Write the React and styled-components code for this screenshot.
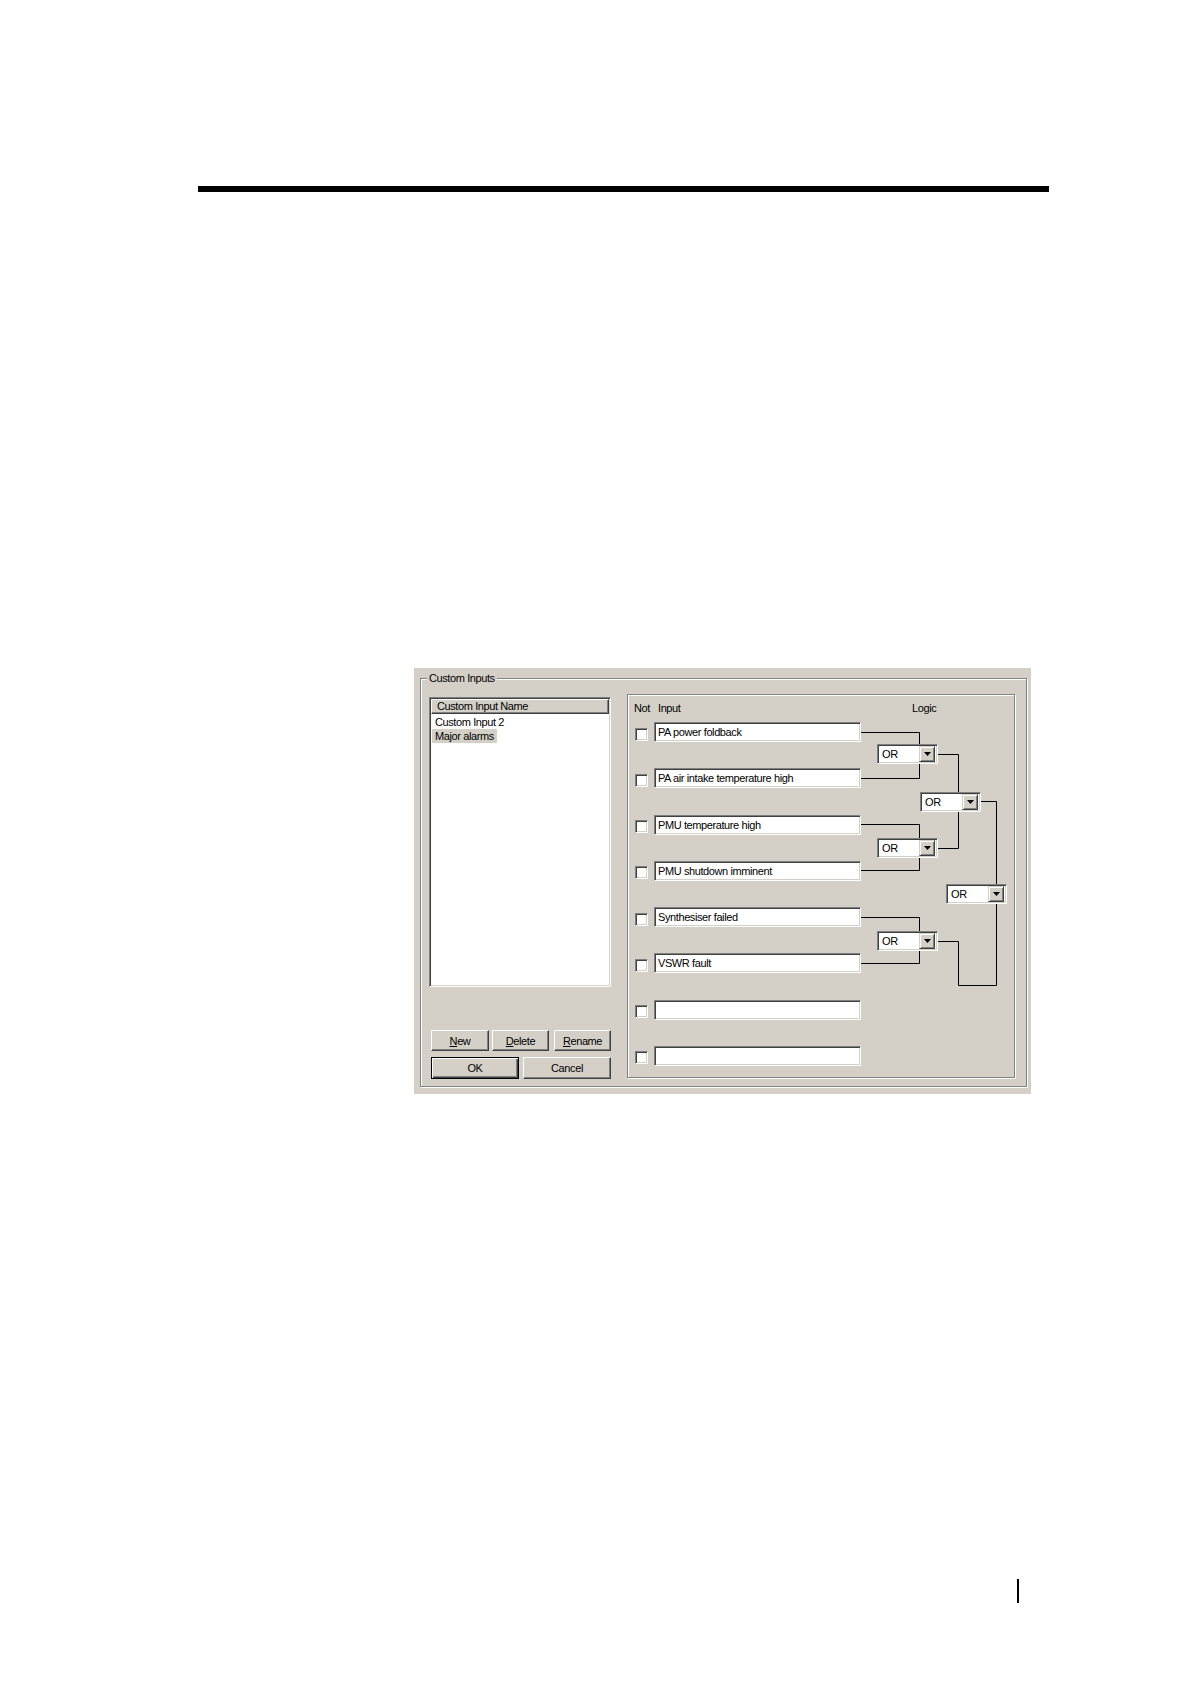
import React from "react";
import styled, { createGlobalStyle } from "styled-components";

const GlobalStyle = createGlobalStyle`
  html, body { margin: 0; padding: 0; background: #ffffff; }
  body { font-family: "Liberation Sans", Arial, sans-serif; }
  * { box-sizing: border-box; }
`;

const FACE = "#d4d0c8";
const SHADOW = "#808080";
const DARK = "#404040";

const Page = styled.div`
  width: 1190px;
  min-height: 1684px;
  display: flex;
  flex-direction: column;
  overflow: hidden;
`;

const Rule = styled.div`
  margin: 186px 0 0 198px;
  width: 851px;
  height: 6px;
  background: #000;
`;

const PageMark = styled.div`
  margin: 485px 0 0 1017px;
  width: 2px;
  height: 24px;
  background: #000;
`;

const Dialog = styled.div`
  margin: 476px 0 0 414px;
  width: 617px;
  height: 426px;
  background: ${FACE};
  padding: 10px 4px 6px 6px;
  font-family: "Liberation Sans", Arial, sans-serif;
  font-size: 11px;
  letter-spacing: -0.4px;
  color: #000;
`;

const GroupBox = styled.div`
  position: relative;
  width: 607px;
  height: 409px;
  border: 1px solid ${SHADOW};
  box-shadow: 1px 1px 0 #fff, inset 1px 1px 0 #fff;
  display: flex;
  align-items: flex-start;
  padding: 15px 0 0 8px;
  gap: 16px;
`;

const Legend = styled.span`
  position: absolute;
  left: 6px;
  top: -8px;
  padding: 0 2px;
  background: ${FACE};
  line-height: 14px;
`;

const LeftColumn = styled.div`
  width: 182px;
  margin-top: 3px;
  display: flex;
  flex-direction: column;
`;

const ListBox = styled.div`
  width: 182px;
  height: 290px;
  background: #fff;
  border: 1px solid;
  border-color: ${SHADOW} #fff #fff ${SHADOW};
  box-shadow: inset 1px 1px 0 ${DARK}, inset -1px -1px 0 ${FACE};
  padding: 1px;
  display: flex;
  flex-direction: column;
`;

const ListHeader = styled.div`
  height: 15px;
  background: ${FACE};
  border: 1px solid;
  border-color: #fff ${DARK} ${DARK} #fff;
  box-shadow: inset -1px -1px 0 ${SHADOW};
  padding-left: 5px;
  line-height: 13px;
`;

const ListItems = styled.div`
  display: flex;
  flex-direction: column;
  align-items: flex-start;
  padding: 1px 0 0 1px;
`;

const ListItem = styled.div`
  height: 14px;
  line-height: 14px;
  padding: 0 3px;
  background: ${(p) => (p.$selected ? FACE : "transparent")};
`;

const ButtonRow = styled.div`
  display: flex;
  padding-left: 2px;
  gap: ${(p) => p.$gap || 3}px;
  margin-top: ${(p) => p.$top}px;
`;

const Button = styled.div`
  width: ${(p) => p.$w}px;
  height: ${(p) => p.$h || 21}px;
  margin-left: ${(p) => p.$ml || 0}px;
  background: ${FACE};
  border: 1px solid;
  border-color: #fff ${DARK} ${DARK} #fff;
  box-shadow: inset -1px -1px 0 ${SHADOW};
  display: flex;
  align-items: center;
  justify-content: center;
  ${(p) =>
    p.$default &&
    `
    border: 1px solid #000;
    box-shadow: inset 1px 1px 0 #fff, inset -1px -1px 0 ${DARK}, inset -2px -2px 0 ${SHADOW};
  `}
  u { text-decoration: underline; text-underline-offset: 1px; }
`;

const Panel = styled.div`
  position: relative;
  width: 388px;
  height: 384px;
  border: 1px solid ${SHADOW};
  box-shadow: 1px 1px 0 #fff, inset 1px 1px 0 #fff;
  display: flex;
  flex-direction: column;
`;

const PanelHeader = styled.div`
  display: flex;
  flex-shrink: 0;
  height: 27px;
  padding: 6px 0 0 6px;
  line-height: 14px;
`;

const HeaderLabel = styled.span`
  width: ${(p) => (p.$w ? `${p.$w}px` : "auto")};
`;

const Row = styled.div`
  flex-shrink: 0;
  height: ${(p) => (p.$last ? "28px" : "46.25px")};
  display: flex;
  align-items: flex-start;
  padding-left: 7px;
`;

const CheckBox = styled.div`
  width: 13px;
  height: 13px;
  margin-top: 5.5px;
  background: #fff;
  border: 1px solid;
  border-color: ${SHADOW} #fff #fff ${SHADOW};
  box-shadow: inset 1px 1px 0 ${DARK}, inset -1px -1px 0 ${FACE};
`;

const TextField = styled.div`
  margin-left: 6px;
  width: 207px;
  height: 20px;
  background: #fff;
  border: 1px solid;
  border-color: ${SHADOW} #fff #fff ${SHADOW};
  box-shadow: inset 1px 1px 0 ${DARK}, inset -1px -1px 0 ${FACE};
  padding-left: 3px;
  line-height: 18px;
  white-space: nowrap;
  overflow: hidden;
`;

const Wires = styled.svg`
  position: absolute;
  left: 0;
  top: 0;
  pointer-events: none;
`;

const Combo = styled.div`
  position: absolute;
  left: ${(p) => p.$x}px;
  top: ${(p) => p.$y}px;
  width: 61px;
  height: 20px;
  background: #fff;
  border: 1px solid;
  border-color: ${SHADOW} #fff #fff ${SHADOW};
  box-shadow: inset 1px 1px 0 ${DARK}, inset -1px -1px 0 ${FACE};
  display: flex;
  align-items: center;
  justify-content: space-between;
  padding: 2px 2px 2px 4px;
  line-height: 14px;
`;

const ComboButton = styled.div`
  width: 16px;
  height: 16px;
  background: ${FACE};
  border: 1px solid;
  border-color: ${FACE} ${DARK} ${DARK} ${FACE};
  box-shadow: inset 1px 1px 0 #fff, inset -1px -1px 0 ${SHADOW};
  display: flex;
  align-items: center;
  justify-content: center;
`;

const Arrow = () => (
  <svg width="7" height="4" viewBox="0 0 7 4">
    <path d="M0 0 H7 L3.5 4 Z" fill="#000" />
  </svg>
);

const inputs = [
  "PA power foldback",
  "PA air intake temperature high",
  "PMU temperature high",
  "PMU shutdown imminent",
  "Synthesiser failed",
  "VSWR fault",
  "",
  "",
];

const combos = [
  { x: 249, y: 49 },
  { x: 292, y: 97 },
  { x: 249, y: 143 },
  { x: 318, y: 189 },
  { x: 249, y: 236 },
];

const wires = [
  "M233 37.5 H291.5 V49",
  "M233 83.5 H291.5 V69",
  "M310 59.5 H330.5 V97",
  "M310 153.5 H330.5 V117",
  "M353 106.5 H368.5 V189",
  "M233 129.5 H291.5 V143",
  "M233 175.5 H291.5 V163",
  "M233 222.5 H291.5 V236",
  "M233 268.5 H291.5 V256",
  "M310 246.5 H330.5 V290.5 H368.5 V209",
];

export default function App() {
  return (
    <>
      <GlobalStyle />
      <Page>
        <Rule />
        <Dialog>
          <GroupBox>
            <Legend>Custom Inputs</Legend>
            <LeftColumn>
              <ListBox>
                <ListHeader>Custom Input Name</ListHeader>
                <ListItems>
                  <ListItem>Custom Input 2</ListItem>
                  <ListItem $selected>Major alarms</ListItem>
                </ListItems>
              </ListBox>
              <ButtonRow $top={43}>
                <Button $w={58}>
                  <span><u>N</u>ew</span>
                </Button>
                <Button $w={57}>
                  <span><u>D</u>elete</span>
                </Button>
                <Button $w={57} $ml={2}>
                  <span><u>R</u>ename</span>
                </Button>
              </ButtonRow>
              <ButtonRow $top={6} $gap={4}>
                <Button $w={88} $h={22} $default>OK</Button>
                <Button $w={88} $h={22}>Cancel</Button>
              </ButtonRow>
            </LeftColumn>
            <Panel>
              <PanelHeader>
                <HeaderLabel $w={24}>Not</HeaderLabel>
                <HeaderLabel $w={254}>Input</HeaderLabel>
                <HeaderLabel>Logic</HeaderLabel>
              </PanelHeader>
              {inputs.map((label, i) => (
                <Row key={i} $last={i === inputs.length - 1}>
                  <CheckBox />
                  <TextField>{label}</TextField>
                </Row>
              ))}
              <Wires width="386" height="382" viewBox="0 0 386 382">
                {wires.map((d, i) => (
                  <path key={i} d={d} fill="none" stroke="#000" strokeWidth="1" />
                ))}
              </Wires>
              {combos.map((c, i) => (
                <Combo key={i} $x={c.x} $y={c.y}>
                  <span>OR</span>
                  <ComboButton>
                    <Arrow />
                  </ComboButton>
                </Combo>
              ))}
            </Panel>
          </GroupBox>
        </Dialog>
        <PageMark />
      </Page>
    </>
  );
}
